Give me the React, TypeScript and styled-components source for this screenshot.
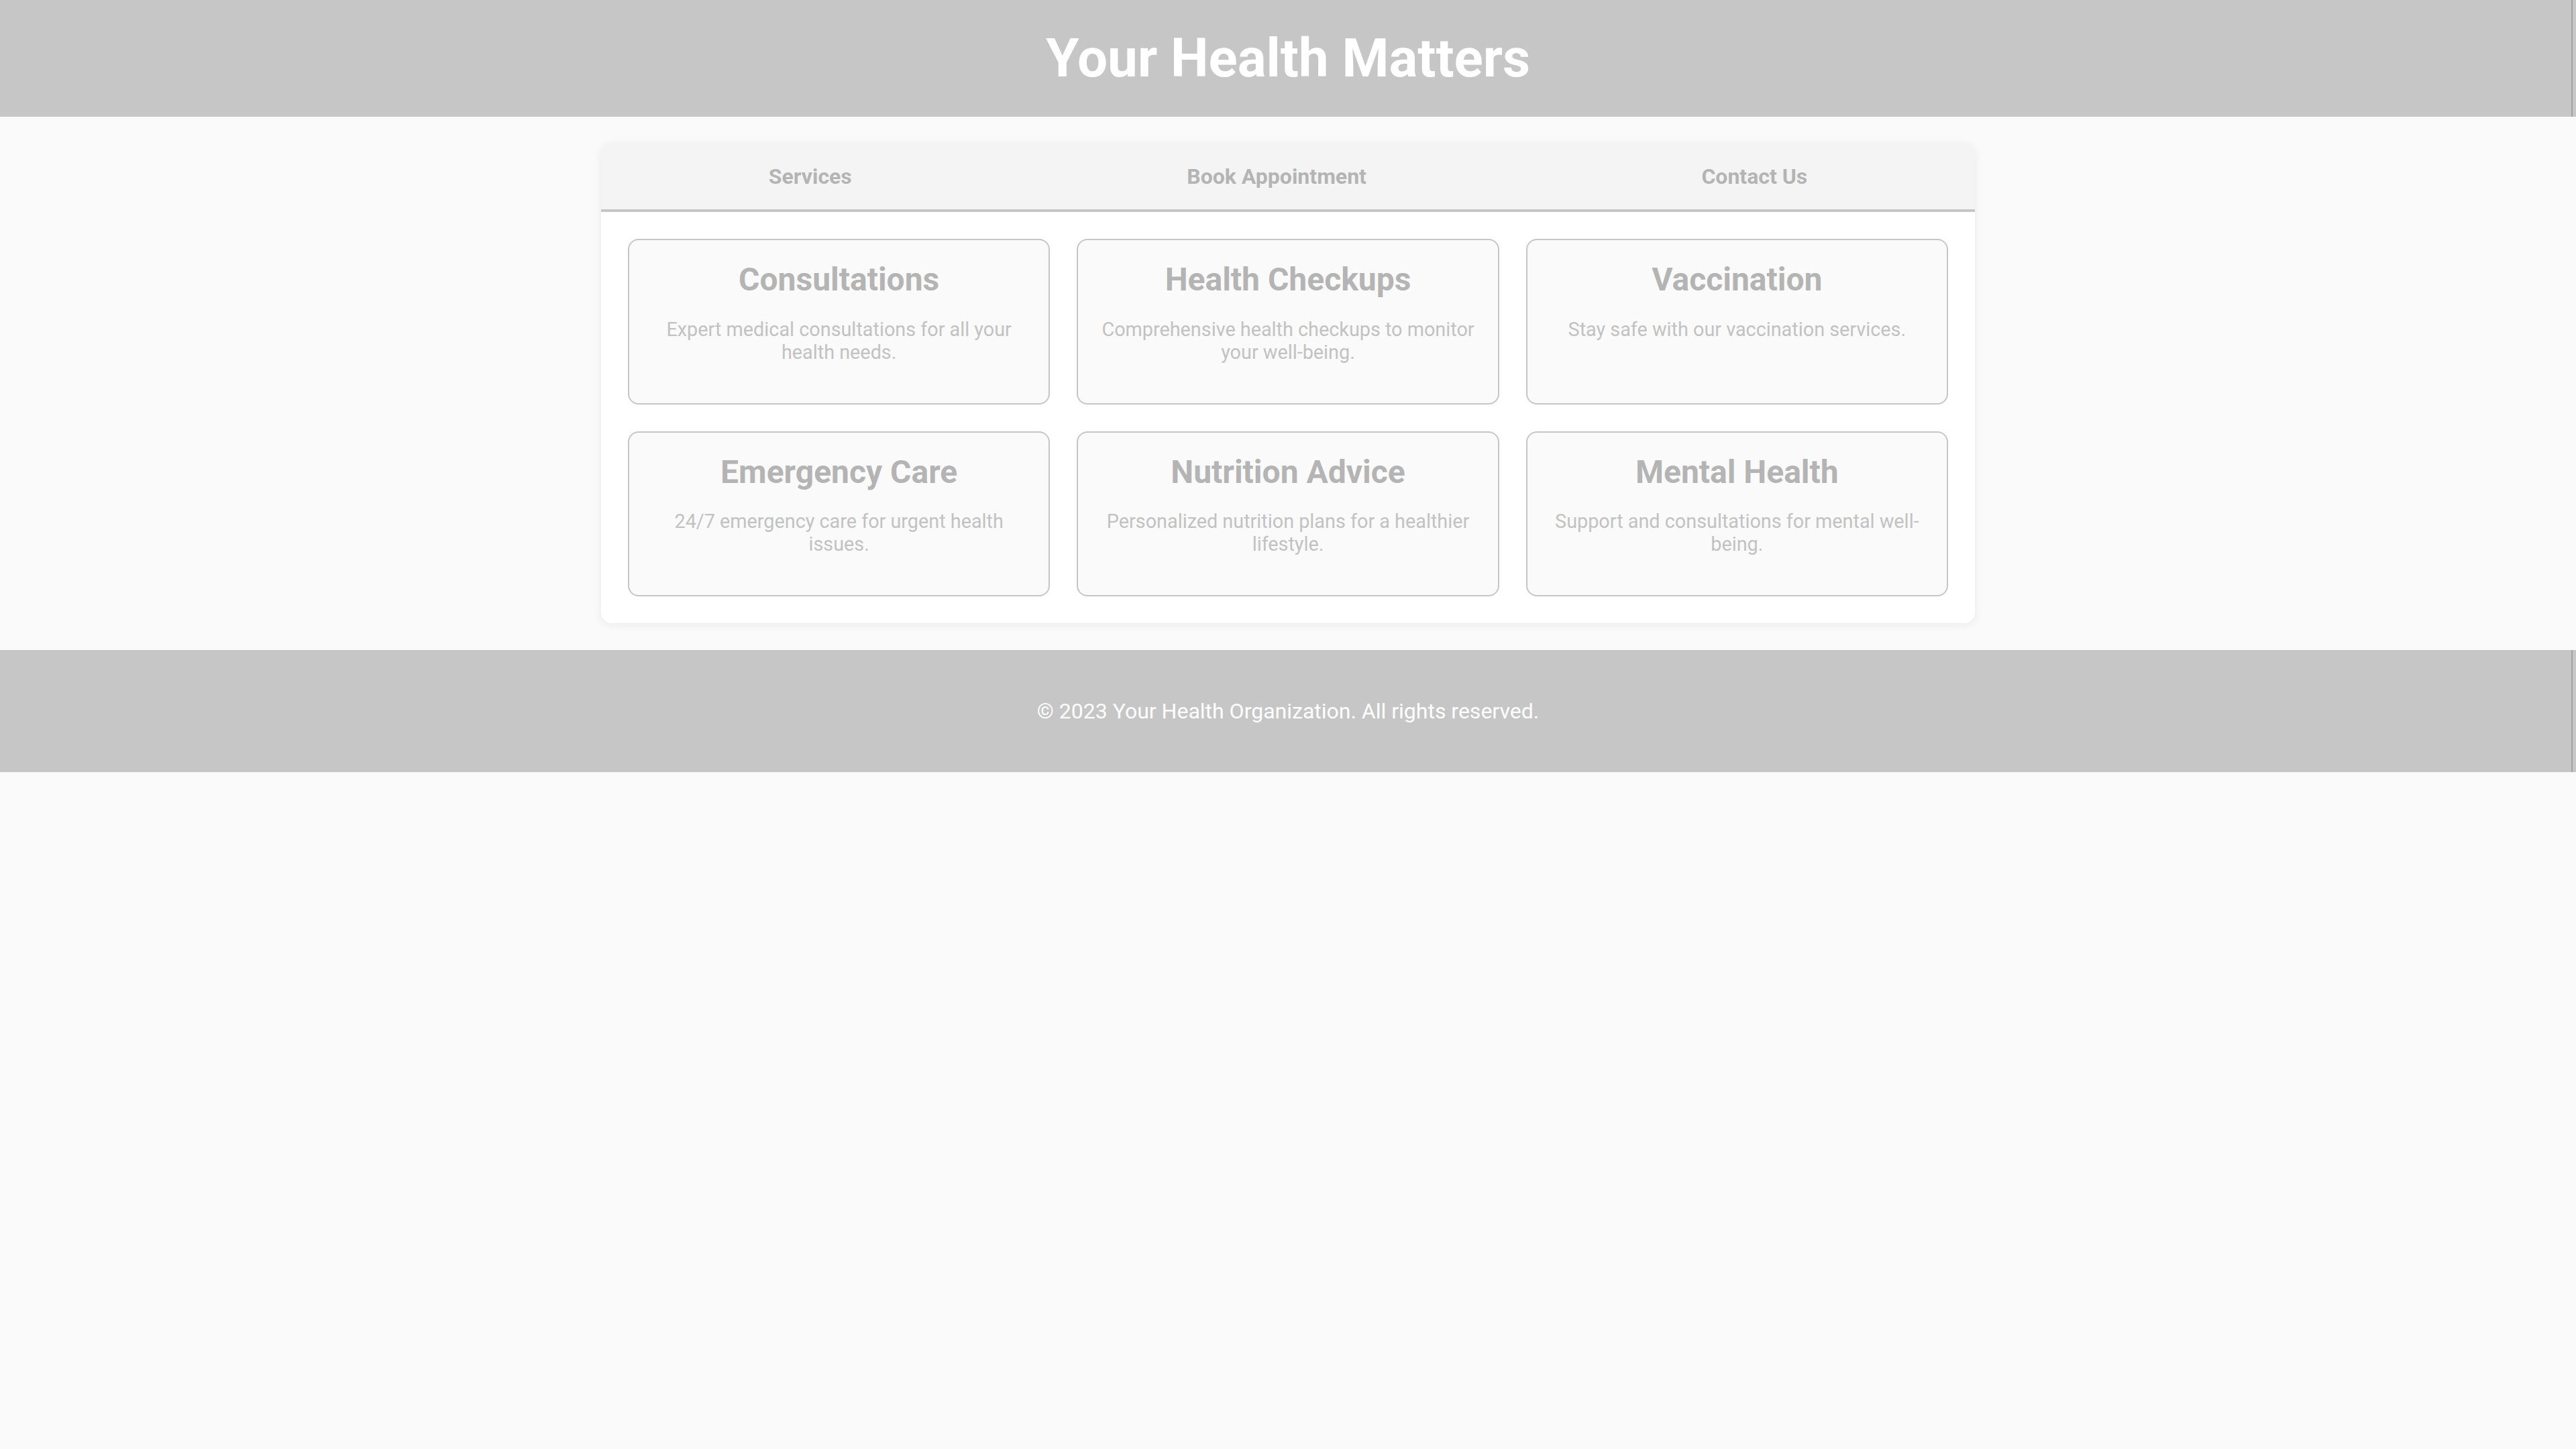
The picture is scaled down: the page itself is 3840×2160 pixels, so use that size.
import React from "react";
import styled, { createGlobalStyle } from "styled-components";

const GlobalStyle = createGlobalStyle`
  html, body {
    margin: 0;
    padding: 0;
    background: #fafafa;
    font-family: Roboto, "Liberation Sans", Arial, sans-serif;
    font-size: 32px;
  }
  * { box-sizing: border-box; }
`;

const Header = styled.header`
  background: linear-gradient(to left, #c6c6c6 5px, #a2a2a2 5px, #a2a2a2 7px, #c6c6c6 7px);
  padding: 40px;
  text-align: center;
`;

const Title = styled.h1`
  margin: 0;
  color: #ffffff;
  font-size: 80px;
  font-weight: 700;
`;

const Main = styled.main`
  padding: 40px;
`;

const Panel = styled.section`
  max-width: 2048px;
  margin: 0 auto;
  background: #ffffff;
  border-radius: 16px;
  overflow: hidden;
  box-shadow: 0 2px 14px rgba(0, 0, 0, 0.07);
`;

const TabBar = styled.nav`
  display: flex;
  background: #f4f4f4;
  border-bottom: 4px solid #c6c6c6;
`;

const Tab = styled.button`
  flex-grow: 1;
  background: transparent;
  border: none;
  padding: 30px 0;
  font-family: Roboto, "Liberation Sans", Arial, sans-serif;
  font-size: 32px;
  line-height: normal;
  font-weight: 700;
  color: #b4b4b4;
  cursor: pointer;
`;

const Grid = styled.div`
  display: grid;
  grid-template-columns: repeat(3, 1fr);
  gap: 40px;
  padding: 40px;
`;

const Card = styled.article`
  background: #fafafa;
  border: 2px solid #c6c6c6;
  border-radius: 16px;
  padding: 30px;
  text-align: center;
`;

const CardTitle = styled.h3`
  margin: 0;
  font-size: 48px;
  font-weight: 700;
  color: #b4b4b4;
`;

const CardText = styled.p`
  margin: 28.8px 0;
  font-size: 28.8px;
  color: #c2c2c2;
`;

const Footer = styled.footer`
  background: linear-gradient(to left, #c6c6c6 5px, #a2a2a2 5px, #a2a2a2 7px, #c6c6c6 7px);
  padding: 40px;
  text-align: center;
`;

const FooterText = styled.p`
  margin: 32px 0;
  font-size: 32px;
  color: #ffffff;
`;

const services = [
  { title: "Consultations", text: "Expert medical consultations for all your health needs." },
  { title: "Health Checkups", text: "Comprehensive health checkups to monitor your well-being." },
  { title: "Vaccination", text: "Stay safe with our vaccination services." },
  { title: "Emergency Care", text: "24/7 emergency care for urgent health issues." },
  { title: "Nutrition Advice", text: "Personalized nutrition plans for a healthier lifestyle." },
  { title: "Mental Health", text: "Support and consultations for mental well-being." },
];

export default function App() {
  return (
    <>
      <GlobalStyle />
      <Header>
        <Title>Your Health Matters</Title>
      </Header>
      <Main>
        <Panel>
          <TabBar>
            <Tab>Services</Tab>
            <Tab>Book Appointment</Tab>
            <Tab>Contact Us</Tab>
          </TabBar>
          <Grid>
            {services.map((s) => (
              <Card key={s.title}>
                <CardTitle>{s.title}</CardTitle>
                <CardText>{s.text}</CardText>
              </Card>
            ))}
          </Grid>
        </Panel>
      </Main>
      <Footer>
        <FooterText>© 2023 Your Health Organization. All rights reserved.</FooterText>
      </Footer>
    </>
  );
}
